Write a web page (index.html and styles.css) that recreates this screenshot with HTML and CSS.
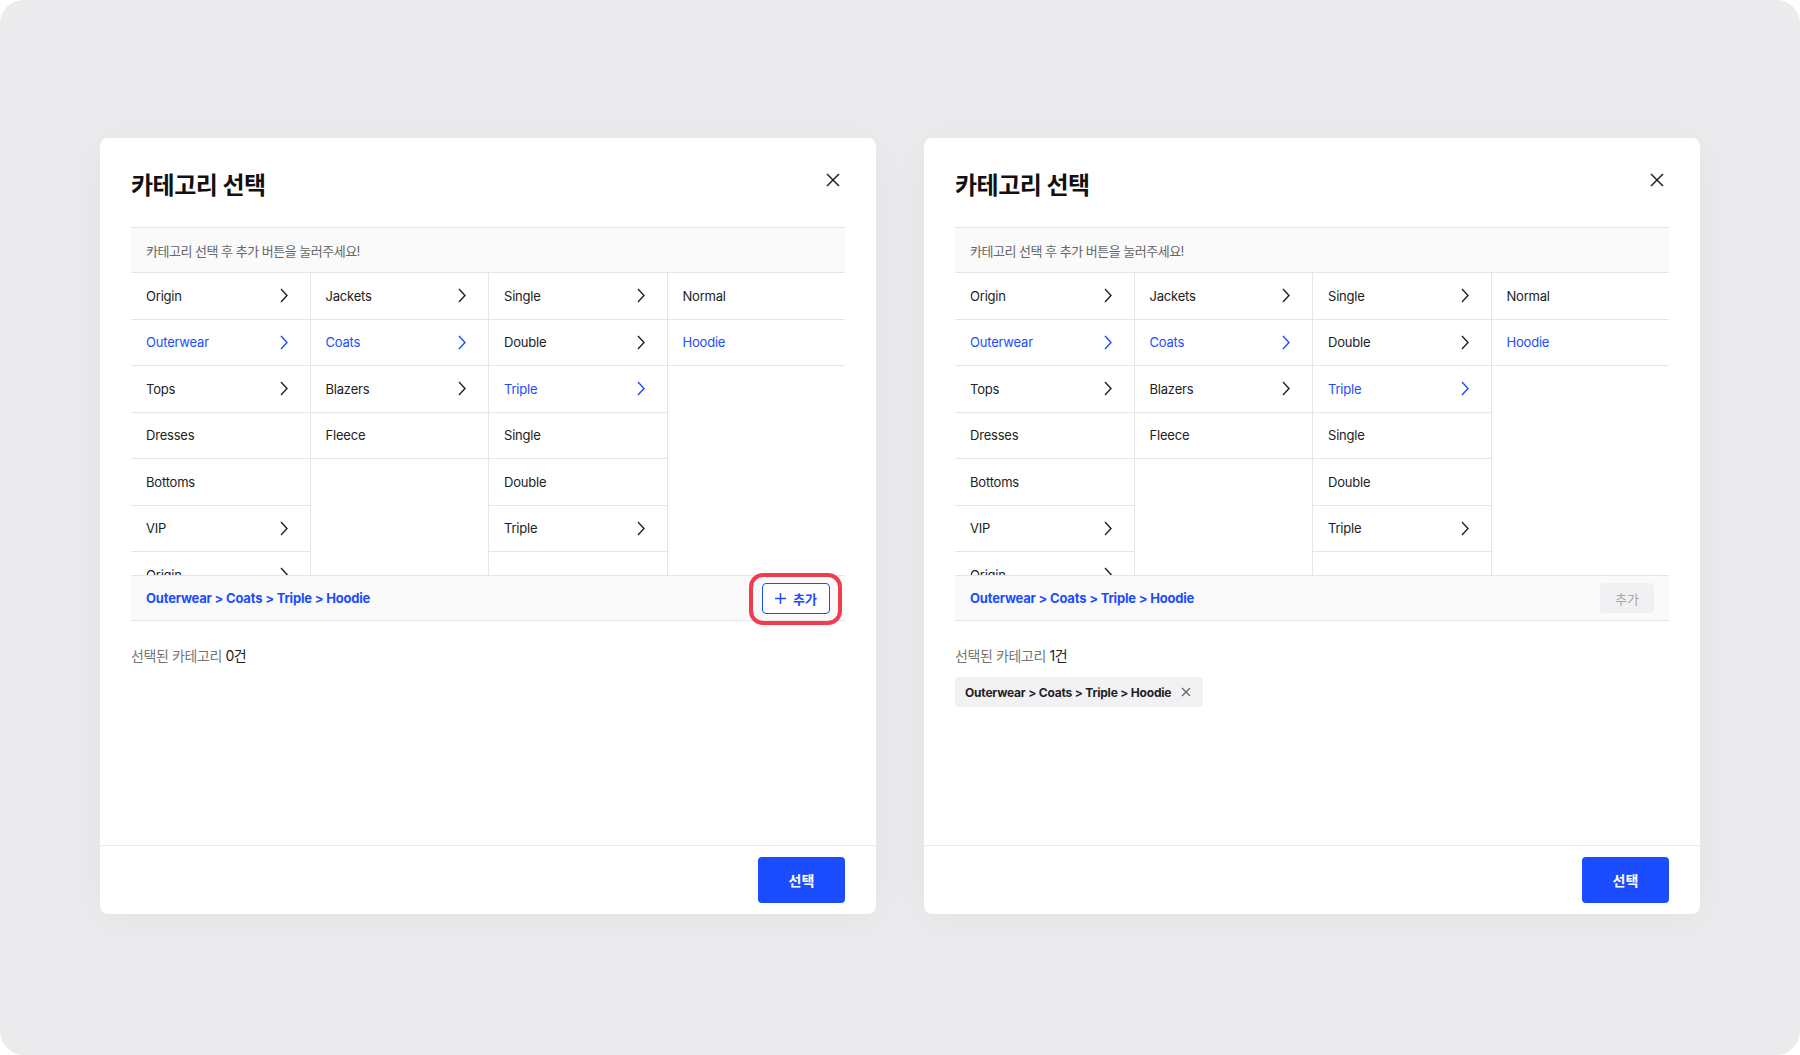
FILE: index.html
```html
<!DOCTYPE html>
<html lang="ko">
  <head>
    <meta charset="UTF-8" />
    <meta name="viewport" content="width=device-width, initial-scale=1.0" />
    <title>카테고리 선택</title>
    <link rel="stylesheet" href="styles.css">
  </head>
  <body>
    <div class="page">
      <!-- before adding -->
      <div class="modal">
        <div class="modal-head">
          <h2>카테고리 선택</h2>
          <button class="close-btn">
            <svg viewBox="0 0 14 14"><path d="M1 1l12 12M13 1L1 13"/></svg>
          </button>
        </div>
        <div class="modal-body">
          <div class="hint">카테고리 선택 후 추가 버튼을 눌러주세요!</div>
          <div class="columns">
            <div class="col">
              <div class="cell">Origin<svg class="chev" viewBox="0 0 8 15"><path d="M1 1l6 6.5L1 14"/></svg></div>
              <div class="cell on">Outerwear<svg class="chev" viewBox="0 0 8 15"><path d="M1 1l6 6.5L1 14"/></svg></div>
              <div class="cell">Tops<svg class="chev" viewBox="0 0 8 15"><path d="M1 1l6 6.5L1 14"/></svg></div>
              <div class="cell">Dresses</div>
              <div class="cell">Bottoms</div>
              <div class="cell">VIP<svg class="chev" viewBox="0 0 8 15"><path d="M1 1l6 6.5L1 14"/></svg></div>
              <div class="cell">Origin<svg class="chev" viewBox="0 0 8 15"><path d="M1 1l6 6.5L1 14"/></svg></div>
            </div>
            <div class="col">
              <div class="cell">Jackets<svg class="chev" viewBox="0 0 8 15"><path d="M1 1l6 6.5L1 14"/></svg></div>
              <div class="cell on">Coats<svg class="chev" viewBox="0 0 8 15"><path d="M1 1l6 6.5L1 14"/></svg></div>
              <div class="cell">Blazers<svg class="chev" viewBox="0 0 8 15"><path d="M1 1l6 6.5L1 14"/></svg></div>
              <div class="cell">Fleece</div>
            </div>
            <div class="col">
              <div class="cell">Single<svg class="chev" viewBox="0 0 8 15"><path d="M1 1l6 6.5L1 14"/></svg></div>
              <div class="cell">Double<svg class="chev" viewBox="0 0 8 15"><path d="M1 1l6 6.5L1 14"/></svg></div>
              <div class="cell on">Triple<svg class="chev" viewBox="0 0 8 15"><path d="M1 1l6 6.5L1 14"/></svg></div>
              <div class="cell">Single</div>
              <div class="cell">Double</div>
              <div class="cell">Triple<svg class="chev" viewBox="0 0 8 15"><path d="M1 1l6 6.5L1 14"/></svg></div>
            </div>
            <div class="col">
              <div class="cell">Normal</div>
              <div class="cell on">Hoodie</div>
            </div>
          </div>
          <div class="path-bar">
            <span class="path">Outerwear &gt; Coats &gt; Triple &gt; Hoodie</span>
            <span class="add-wrap">
              <button class="add-btn">
                <svg viewBox="0 0 11 11"><path d="M5.5 0v11M0 5.5h11"/></svg>추가
              </button>
              <span class="ring"></span>
            </span>
          </div>
          <p class="count">선택된 카테고리 <b>0건</b></p>
        </div>
        <div class="modal-foot">
          <button class="submit-btn">선택</button>
        </div>
      </div>

      <!-- after adding -->
      <div class="modal">
        <div class="modal-head">
          <h2>카테고리 선택</h2>
          <button class="close-btn">
            <svg viewBox="0 0 14 14"><path d="M1 1l12 12M13 1L1 13"/></svg>
          </button>
        </div>
        <div class="modal-body">
          <div class="hint">카테고리 선택 후 추가 버튼을 눌러주세요!</div>
          <div class="columns">
            <div class="col">
              <div class="cell">Origin<svg class="chev" viewBox="0 0 8 15"><path d="M1 1l6 6.5L1 14"/></svg></div>
              <div class="cell on">Outerwear<svg class="chev" viewBox="0 0 8 15"><path d="M1 1l6 6.5L1 14"/></svg></div>
              <div class="cell">Tops<svg class="chev" viewBox="0 0 8 15"><path d="M1 1l6 6.5L1 14"/></svg></div>
              <div class="cell">Dresses</div>
              <div class="cell">Bottoms</div>
              <div class="cell">VIP<svg class="chev" viewBox="0 0 8 15"><path d="M1 1l6 6.5L1 14"/></svg></div>
              <div class="cell">Origin<svg class="chev" viewBox="0 0 8 15"><path d="M1 1l6 6.5L1 14"/></svg></div>
            </div>
            <div class="col">
              <div class="cell">Jackets<svg class="chev" viewBox="0 0 8 15"><path d="M1 1l6 6.5L1 14"/></svg></div>
              <div class="cell on">Coats<svg class="chev" viewBox="0 0 8 15"><path d="M1 1l6 6.5L1 14"/></svg></div>
              <div class="cell">Blazers<svg class="chev" viewBox="0 0 8 15"><path d="M1 1l6 6.5L1 14"/></svg></div>
              <div class="cell">Fleece</div>
            </div>
            <div class="col">
              <div class="cell">Single<svg class="chev" viewBox="0 0 8 15"><path d="M1 1l6 6.5L1 14"/></svg></div>
              <div class="cell">Double<svg class="chev" viewBox="0 0 8 15"><path d="M1 1l6 6.5L1 14"/></svg></div>
              <div class="cell on">Triple<svg class="chev" viewBox="0 0 8 15"><path d="M1 1l6 6.5L1 14"/></svg></div>
              <div class="cell">Single</div>
              <div class="cell">Double</div>
              <div class="cell">Triple<svg class="chev" viewBox="0 0 8 15"><path d="M1 1l6 6.5L1 14"/></svg></div>
            </div>
            <div class="col">
              <div class="cell">Normal</div>
              <div class="cell on">Hoodie</div>
            </div>
          </div>
          <div class="path-bar">
            <span class="path">Outerwear &gt; Coats &gt; Triple &gt; Hoodie</span>
            <button class="add-btn disabled">추가</button>
          </div>
          <p class="count">선택된 카테고리 <b>1건</b></p>
          <div class="chips">
            <span class="chip">Outerwear &gt; Coats &gt; Triple &gt; Hoodie
              <svg viewBox="0 0 10 10"><path d="M1 1l8 8M9 1L1 9"/></svg>
            </span>
          </div>
        </div>
        <div class="modal-foot">
          <button class="submit-btn">선택</button>
        </div>
      </div>
    </div>
  </body>
</html>
```

FILE: styles.css
```css
body {
  margin: 0;
  background: #fff;
  font-family: "Inter", "Noto Sans CJK KR", sans-serif;
  color: #222;
}
.page {
  width: 1800px;
  height: 1055px;
  box-sizing: border-box;
  background: #ebebed;
  border-radius: 24px;
  display: flex;
  gap: 48px;
  padding: 138px 0 0 100px;
}
.modal {
  width: 776px;
  height: 776px;
  background: #fff;
  border-radius: 8px;
  box-shadow: 0 4px 40px rgba(0, 0, 0, 0.04);
  display: flex;
  flex-direction: column;
}
.modal-head {
  height: 89px;
  box-sizing: border-box;
  padding: 30px 31px 0 31px;
  display: flex;
  justify-content: space-between;
  align-items: flex-start;
}
.modal-head h2 {
  margin: 1px 0 0;
  font-size: 24px;
  line-height: 34px;
  font-weight: 700;
  letter-spacing: -0.5px;
  color: #111;
}
.close-btn {
  width: 24px;
  height: 24px;
  padding: 5px;
  border: 0;
  background: none;
}
.close-btn svg {
  display: block;
  width: 14px;
  height: 14px;
  fill: none;
  stroke: #222;
  stroke-width: 1.5;
}
.modal-body {
  flex: 1;
  padding: 0 31px;
}
.hint {
  height: 46px;
  box-sizing: border-box;
  padding-left: 15px;
  display: flex;
  align-items: center;
  background: #fafafb;
  border-top: 1px solid #e6e6ea;
  border-bottom: 1px solid #e6e6ea;
  font-size: 13px;
  color: #666;
  letter-spacing: -0.5px;
}
.columns {
  height: 302px;
  overflow: hidden;
  display: grid;
  grid-template-columns: repeat(4, 1fr);
}
.col + .col {
  border-left: 1px solid #e6e6ea;
}
.cell {
  height: 46.5px;
  box-sizing: border-box;
  border-bottom: 1px solid #e6e6ea;
  padding: 0 22px 0 15px;
  display: flex;
  align-items: center;
  justify-content: space-between;
  font-size: 13px;
  letter-spacing: -0.2px;
  color: #222;
}
.cell.on {
  color: #1b4dff;
}
.chev {
  width: 8px;
  height: 15px;
  fill: none;
  stroke: currentColor;
  stroke-width: 1.4;
}
.path-bar {
  height: 46px;
  box-sizing: border-box;
  padding: 0 15px;
  display: flex;
  align-items: center;
  justify-content: space-between;
  background: #fafafb;
  border-top: 1px solid #e6e6ea;
  border-bottom: 1px solid #e6e6ea;
}
.path {
  font-size: 13px;
  font-weight: 700;
  letter-spacing: -0.2px;
  color: #1b4dff;
}
.add-wrap {
  position: relative;
  display: flex;
}
.add-btn {
  height: 31px;
  padding: 0 12px;
  display: flex;
  align-items: center;
  gap: 7px;
  border: 1px solid #1b4dff;
  border-radius: 4px;
  background: #fff;
  font-family: inherit;
  font-size: 13px;
  font-weight: 700;
  color: #1b4dff;
}
.add-btn svg {
  width: 11px;
  height: 11px;
  fill: none;
  stroke: #1b4dff;
  stroke-width: 1.5;
}
.add-btn.disabled {
  height: 30px;
  padding: 0 15px;
  border: 0;
  background: #f1f1f4;
  color: #a6a6ae;
  font-weight: 400;
}
/* highlight around the add button */
.ring {
  position: absolute;
  top: -10px;
  bottom: -11px;
  left: -13px;
  right: -12px;
  border: 4px solid #f23c4d;
  border-radius: 14px;
}
.count {
  margin: 24px 0 0;
  font-size: 14px;
  line-height: 22px;
  letter-spacing: -0.4px;
  color: #777;
}
.count b {
  font-weight: 400;
  color: #222;
}
.chips {
  margin-top: 10px;
  display: flex;
}
.chip {
  height: 30px;
  padding: 0 12px 0 10px;
  display: flex;
  align-items: center;
  gap: 10px;
  background: #f2f2f5;
  border-radius: 4px;
  font-size: 12px;
  font-weight: 700;
  letter-spacing: -0.2px;
  color: #222;
}
.chip svg {
  width: 10px;
  height: 10px;
  fill: none;
  stroke: #666;
  stroke-width: 1.3;
}
.modal-foot {
  height: 69px;
  box-sizing: border-box;
  border-top: 1px solid #ececf0;
  padding: 0 31px;
  display: flex;
  align-items: center;
  justify-content: flex-end;
}
.submit-btn {
  width: 87px;
  height: 46px;
  border: 0;
  border-radius: 4px;
  background: #1b4dff;
  color: #fff;
  font-family: inherit;
  font-size: 14px;
  font-weight: 700;
}
```
